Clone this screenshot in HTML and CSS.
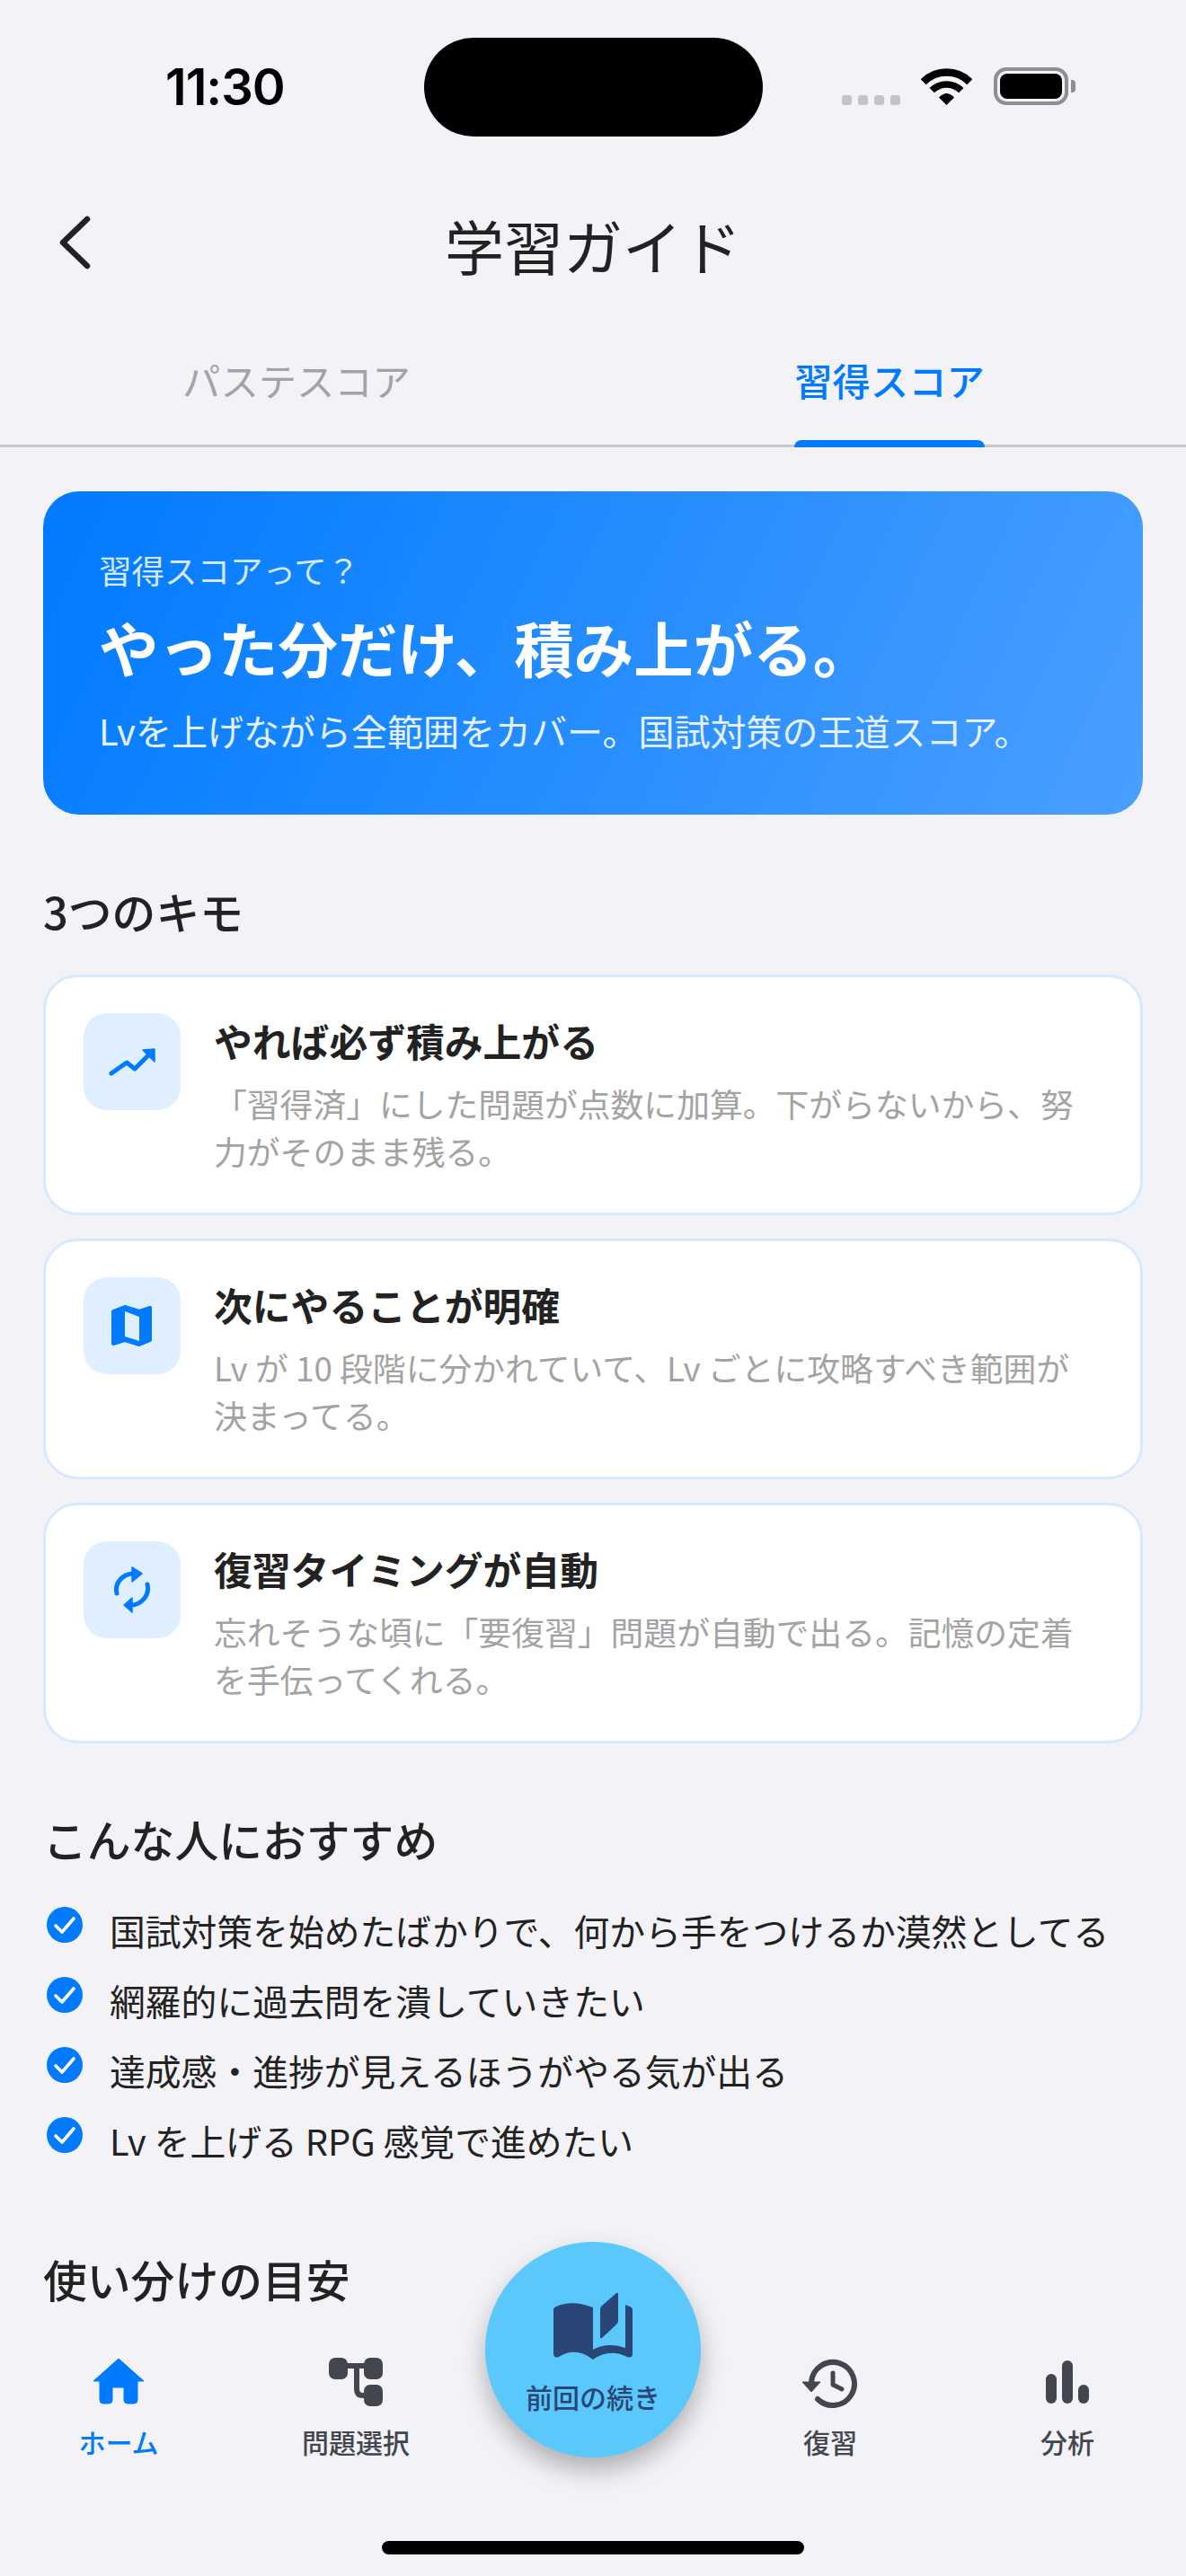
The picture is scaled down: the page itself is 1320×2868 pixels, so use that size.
FILE: index.html

```html
<!DOCTYPE html>
<html lang="ja">
<head>
  <meta charset="UTF-8">
  <title>学習ガイド</title>
  <link rel="stylesheet" href="styles.css">
</head>
<body>

<div class="screen">

  <div class="status">
    <span class="time">11:30</span>
    <div class="island"></div>
    <div class="status-icons">
      <div class="dots"><i></i><i></i><i></i><i></i></div>
      <svg class="wifi" viewBox="0 0 57 42">
        <path d="M2.7 16.2A36.5 36.5 0 0 1 54.3 16.2" fill="none" stroke="#000" stroke-width="8.5"/>
        <path d="M12.2 25.7A23 23 0 0 1 44.8 25.7" fill="none" stroke="#000" stroke-width="7.5"/>
        <path d="M28.5 42L20 33.5Q28.5 24.5 37 33.5Z" fill="#000"/>
      </svg>
      <div class="battery"><div class="battery-fill"></div></div>
      <div class="battery-nub"></div>
    </div>
  </div>

  <header class="nav">
    <svg class="back" viewBox="0 0 40 60">
      <path d="M33 4L6 30L33 56" fill="none" stroke="#222" stroke-width="6.5" stroke-linecap="round" stroke-linejoin="round"/>
    </svg>
    <h1>学習ガイド</h1>
  </header>

  <div class="tabs">
    <div class="tab">パステスコア</div>
    <div class="tab tab-on"><span>習得スコア</span></div>
  </div>

  <main class="content">

    <section class="hero">
      <p class="hero-label">習得スコアって？</p>
      <h2>やった分だけ、積み上がる。</h2>
      <p class="hero-sub">Lvを上げながら全範囲をカバー。国試対策の王道スコア。</p>
    </section>

    <h3 class="heading heading-first">3つのキモ</h3>

    <div class="cards">
      <div class="card">
        <div class="card-icon">
          <svg viewBox="0 0 108 108">
            <path d="M31 67L48 55L57 62L74 45" fill="none" stroke="#007aff" stroke-width="5" stroke-linecap="round" stroke-linejoin="round"/>
            <path d="M66 41L79 40L79 54Z" fill="#007aff" stroke="#007aff" stroke-width="1.5" stroke-linejoin="round"/>
          </svg>
        </div>
        <div class="card-text">
          <h4>やれば必ず積み上がる</h4>
          <p>「習得済」にした問題が点数に加算。下がらないから、努<br>力がそのまま残る。</p>
        </div>
      </div>
      <div class="card">
        <div class="card-icon">
          <svg viewBox="0 0 108 108">
            <path d="M33 38L46 33L62 38L74 34V70L62 75L46 70L33 74Z" fill="#007aff" stroke="#007aff" stroke-width="4" stroke-linejoin="round"/>
            <path d="M46 38L62 44V71L46 66Z" fill="#e0efff"/>
          </svg>
        </div>
        <div class="card-text">
          <h4>次にやることが明確</h4>
          <p>Lv が 10 段階に分かれていて、Lv ごとに攻略すべき範囲が<br>決まってる。</p>
        </div>
      </div>
      <div class="card">
        <div class="card-icon">
          <svg viewBox="0 0 108 108">
            <path d="M37 58C34 46 44 36 56 36" fill="none" stroke="#007aff" stroke-width="5" stroke-linecap="round"/>
            <path d="M54 29L65 36L54 45Z" fill="#007aff" stroke="#007aff" stroke-width="1.5" stroke-linejoin="round"/>
            <path d="M71 48C74 60 64 71 53 71" fill="none" stroke="#007aff" stroke-width="5" stroke-linecap="round"/>
            <path d="M54 63L45 71L54 79Z" fill="#007aff" stroke="#007aff" stroke-width="1.5" stroke-linejoin="round"/>
          </svg>
        </div>
        <div class="card-text">
          <h4>復習タイミングが自動</h4>
          <p>忘れそうな頃に「要復習」問題が自動で出る。記憶の定着<br>を手伝ってくれる。</p>
        </div>
      </div>
    </div>

    <h3 class="heading heading-list">こんな人におすすめ</h3>

    <ul class="checks">
      <li><svg viewBox="0 0 40 40"><circle cx="20" cy="20" r="20" fill="#007aff"/><path d="M10 21L17 28L30 13" fill="none" stroke="#fff" stroke-width="3.6" stroke-linecap="round" stroke-linejoin="round"/></svg>国試対策を始めたばかりで、何から手をつけるか漠然としてる</li>
      <li><svg viewBox="0 0 40 40"><circle cx="20" cy="20" r="20" fill="#007aff"/><path d="M10 21L17 28L30 13" fill="none" stroke="#fff" stroke-width="3.6" stroke-linecap="round" stroke-linejoin="round"/></svg>網羅的に過去問を潰していきたい</li>
      <li><svg viewBox="0 0 40 40"><circle cx="20" cy="20" r="20" fill="#007aff"/><path d="M10 21L17 28L30 13" fill="none" stroke="#fff" stroke-width="3.6" stroke-linecap="round" stroke-linejoin="round"/></svg>達成感・進捗が見えるほうがやる気が出る</li>
      <li><svg viewBox="0 0 40 40"><circle cx="20" cy="20" r="20" fill="#007aff"/><path d="M10 21L17 28L30 13" fill="none" stroke="#fff" stroke-width="3.6" stroke-linecap="round" stroke-linejoin="round"/></svg>Lv を上げる RPG 感覚で進めたい</li>
    </ul>

    <h3 class="heading heading-last">使い分けの目安</h3>

  </main>

  <nav class="tabbar">
    <div class="tabbar-item tabbar-on">
      <svg viewBox="0 0 64 64">
        <path d="M32 6L60 31H53V52Q53 56 49 56H42Q38 56 38 52V38H25V52Q25 56 21 56H15Q11 56 11 52V31H4Z" fill="#007aff" stroke="#007aff" stroke-width="1" stroke-linejoin="round"/>
      </svg>
      <span>ホーム</span>
    </div>
    <div class="tabbar-item">
      <svg viewBox="0 0 64 64">
        <rect x="2" y="5" width="21" height="24" rx="7" fill="#43464f"/>
        <rect x="41" y="5" width="21" height="24" rx="7" fill="#43464f"/>
        <rect x="41" y="35" width="21" height="24" rx="7" fill="#43464f"/>
        <path d="M20 14H44M33 14V40Q33 47 40 47H44" fill="none" stroke="#43464f" stroke-width="6"/>
      </svg>
      <span>問題選択</span>
    </div>
    <div class="tabbar-item tabbar-gap"></div>
    <div class="tabbar-item">
      <svg viewBox="0 0 64 64">
        <path d="M18 51A24 24 0 1 0 11 32" fill="none" stroke="#43464f" stroke-width="6" stroke-linecap="round"/>
        <path d="M1 32H21L11 43Z" fill="#43464f" stroke="#43464f" stroke-width="1" stroke-linejoin="round"/>
        <path d="M35 22V35L45 40" fill="none" stroke="#43464f" stroke-width="5" stroke-linecap="round" stroke-linejoin="round"/>
      </svg>
      <span>復習</span>
    </div>
    <div class="tabbar-item">
      <svg viewBox="0 0 64 64">
        <rect x="8" y="23" width="12" height="33" rx="6" fill="#43464f"/>
        <rect x="26" y="8" width="12" height="48" rx="6" fill="#43464f"/>
        <rect x="44" y="35" width="12" height="21" rx="6" fill="#43464f"/>
      </svg>
      <span>分析</span>
    </div>
  </nav>

  <button class="resume">
    <svg viewBox="0 0 88 76">
      <path d="M0 20Q0 17 3 16Q21 8 44 17V75Q25 60 6 72Q0 74 0 68Z" fill="#2a4676"/>
      <path d="M44 64Q60 55 80 62V14L85 16Q88 17 88 20V68Q88 74 82 72Q62 62 44 75Z" fill="#2a4676"/>
      <path d="M52 19Q52 17 54 15L70 1Q72 0 72 2V32Q72 34 70 36L54 51Q52 52 52 50Z" fill="#2a4676"/>
    </svg>
    <span>前回の続き</span>
  </button>

  <div class="home-bar"></div>

</div>

</body>
</html>
```

FILE: styles.css

```css
* { box-sizing: border-box; }
body { margin: 0; background: #f2f2f7; font-family: "Noto Sans CJK JP", "Noto Sans", sans-serif; color: #222; }
h1, h2, h3, h4, p, ul { margin: 0; padding: 0; }

.screen { position: relative; width: 1320px; height: 2868px; overflow: hidden; }

/* status bar */
.status { position: relative; height: 170px; }
.time { position: absolute; left: 184px; top: 64px; font-family: Inter, sans-serif; font-size: 56px; line-height: 66px; font-weight: 600; color: #000; letter-spacing: -1px; }
.island { position: absolute; left: 472px; top: 42px; width: 377px; height: 110px; border-radius: 55px; background: #000; }
.status-icons { position: absolute; left: 937px; top: 75px; display: flex; align-items: flex-end; }
.dots { display: flex; gap: 7px; margin-right: 23px; }
.dots i { width: 11px; height: 11px; border-radius: 3px; background: #c4c4c8; }
.wifi { width: 57px; height: 42px; margin-right: 24px; display: block; }
.battery { width: 83px; height: 42px; padding: 3px; border: 4px solid #8e8e93; border-radius: 14px; }
.battery-fill { height: 100%; border-radius: 8px; background: #000; }
.battery-nub { width: 5px; height: 14px; margin: 0 0 14px 3px; border-radius: 0 4px 4px 0; background: #8e8e93; }

/* nav */
.nav { position: relative; height: 210px; padding-bottom: 6px; display: flex; align-items: center; justify-content: center; }
.nav h1 { font-size: 66px; line-height: 100px; font-weight: 400; }
.back { position: absolute; left: 64px; top: 70px; width: 40px; height: 60px; }

.tabs { display: flex; height: 118px; border-bottom: 3px solid #c8c8ce; }
.tab { flex: 1; text-align: center; font-size: 42.3px; line-height: 60px; color: #a3a3a3; padding-top: 13px; }
.tab-on { color: #007aff; font-weight: 500; }
.tab-on span { position: relative; display: inline-block; }
.tab-on span::after { content: ""; position: absolute; left: 0; right: 0; top: 97px; height: 8px; border-radius: 8px 8px 0 0; background: #007aff; }

/* content */
.content { padding: 49px 48px 0; }

.hero { height: 360px; padding: 62px 62px 0; border-radius: 40px; background: linear-gradient(115deg, #007aff, #4a9fff); color: #fff; }
.hero-label { font-size: 36.5px; line-height: 52px; color: #d6e8ff; }
.hero h2 { margin-top: 14px; font-size: 66.5px; line-height: 90px; font-weight: 700; }
.hero-sub { margin-top: 20px; font-size: 40px; line-height: 56px; color: #e6f1ff; }

.heading { font-size: 48.8px; line-height: 68px; font-weight: 500; }
.heading-first { margin-top: 73px; }
.heading-list { margin-top: 72px; }
.heading-last { margin-top: 82px; }

.cards { margin-top: 37px; display: flex; flex-direction: column; gap: 26px; }
.card { height: 268px; display: flex; gap: 37px; padding: 40px 42px; border: 3px solid #d8e9ff; border-radius: 38px; background: #fff; }
.card-icon { flex: none; width: 108px; height: 108px; border-radius: 26px; background: #e0efff; }
.card-icon svg { display: block; width: 108px; height: 108px; }
.card-text h4 { font-size: 42.8px; line-height: 60px; font-weight: 700; }
.card-text p { margin-top: 14px; font-size: 36.8px; line-height: 53px; color: #a3a3a3; }

.checks { margin-top: 28px; list-style: none; }
.checks li { display: flex; align-items: center; height: 78px; font-size: 39.8px; color: #222; }
.checks svg { flex: none; width: 40px; height: 40px; margin: 0 30px 10px 4px; }

/* bottom bar */
.tabbar { position: absolute; left: 0; right: 0; top: 2620px; display: grid; grid-template-columns: repeat(5, 264px); }
.tabbar-item { display: flex; flex-direction: column; align-items: center; color: #43464f; }
.tabbar-item svg { width: 64px; height: 64px; display: block; }
.tabbar-item span { margin-top: 12px; font-size: 30px; line-height: 44px; font-weight: 500; }
.tabbar-on { color: #007aff; }

.resume { position: absolute; left: 540px; top: 2496px; width: 240px; height: 240px; padding: 56px 0 0; border: 0; border-radius: 50%; background: #5ac8fa; color: #2a4676; font-family: inherit; box-shadow: 0 14px 28px rgba(0, 0, 0, .28); display: flex; flex-direction: column; align-items: center; }
.resume svg { width: 88px; height: 76px; display: block; }
.resume span { margin-top: 18px; font-size: 30px; line-height: 44px; font-weight: 500; }

.home-bar { position: absolute; left: 425px; top: 2829px; width: 470px; height: 15px; border-radius: 8px; background: #000; }
```
